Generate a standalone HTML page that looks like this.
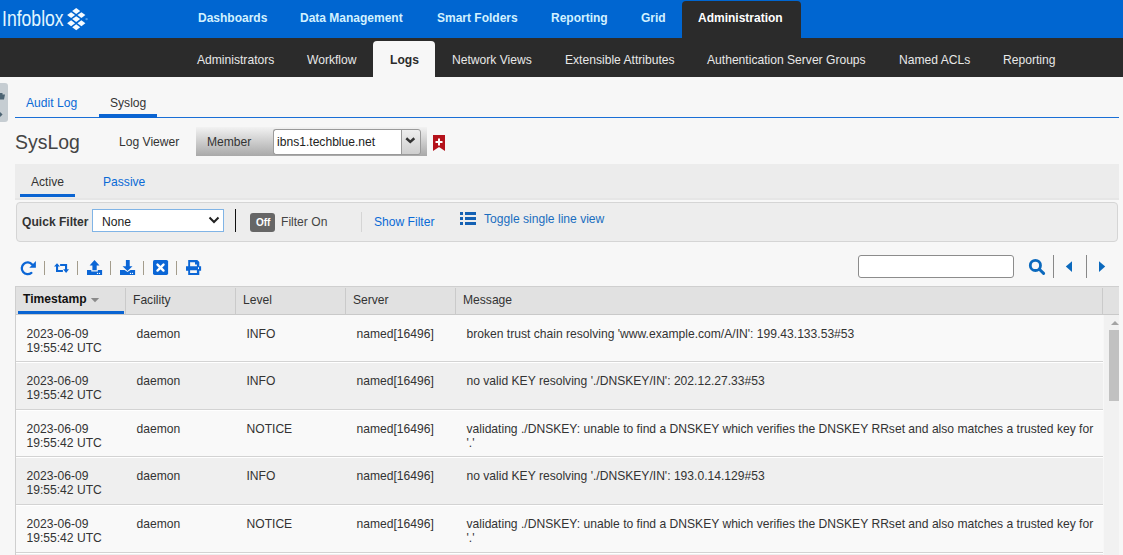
<!DOCTYPE html>
<html><head><meta charset="utf-8">
<style>
*{box-sizing:border-box;margin:0;padding:0}
html,body{width:1123px;height:555px;overflow:hidden;background:#f7f7f7;font-family:"Liberation Sans",sans-serif;font-size:12.1px;color:#333}
.abs{position:absolute;white-space:nowrap;line-height:14px}
#top{position:absolute;left:0;top:0;width:1123px;height:38px;background:#0066d1}
#top .n{position:absolute;top:11px;font-weight:bold;font-size:12px;color:#d2f1ff;line-height:14px;white-space:nowrap}
#adm{position:absolute;left:682px;top:1px;width:119px;height:37px;background:#2b2b2b;border-radius:4px 4px 0 0}
#sub{position:absolute;left:0;top:38px;width:1123px;height:39px;background:#2b2b2b}
#sub .n{position:absolute;top:15px;color:#e8e8e8;line-height:14px;white-space:nowrap}
#logs{position:absolute;left:373px;top:3px;width:62px;height:36px;background:#f7f7f7;border-radius:4px 4px 0 0}
.blue{color:#0a6ad6}
#tabline{position:absolute;left:15px;top:117px;width:1104px;height:1px;background:#1a6fd6}
#member{position:absolute;left:196px;top:127px;width:231px;height:29px;background:linear-gradient(#f2f2f2,#a9a9a9)}
#minput{position:absolute;left:273px;top:129px;width:130px;height:26px;background:#fff;border:1px solid #9a9a9a;border-radius:3px 0 0 3px;border-right:none}
#mbtn{position:absolute;left:401px;top:129px;width:20px;height:26px;background:linear-gradient(#eeeeee,#cfcfcf);border:1px solid #9a9a9a;border-radius:0 3px 3px 0}
#band{position:absolute;left:15px;top:164px;width:1104px;height:36px;background:#ececec;border-bottom:2px solid #e6e6e6}
#qf{position:absolute;left:16px;top:202px;width:1102px;height:40px;background:#ededed;border:1px solid #d5d5d5;border-radius:4px}
#sel{position:absolute;left:92px;top:209px;width:132px;height:23px;background:#fff;border:1px solid #80b4e6}
.sep{position:absolute;width:1px;background:#a39c8c}
#search{position:absolute;left:858px;top:255px;width:156px;height:23px;background:#fff;border:1px solid #8c8c8c;border-radius:3px}
#grid{position:absolute;left:15px;top:286px;width:1104px;height:280px;border:1px solid #cfcfcf;border-bottom:none;border-right:none;background:#f9f9f9}
#hdr{position:absolute;left:0;top:0;width:1103px;height:28px;background:#e1e1e1;border-bottom:1px solid #c9c9c9}
.hc{position:absolute;top:1px;height:27px;border-right:1px solid #cacaca}
.ht{position:absolute;top:6px;line-height:14px;color:#333;white-space:nowrap}
.row{position:absolute;left:0;width:1087px;border-bottom:1px solid #d3d3d3}
.row .c{position:absolute;top:12px;line-height:14px;color:#333;white-space:nowrap}
</style></head><body>
<div id="top">
  <div class="abs" style="left:2px;top:6px;color:#e2f6ff;font-size:22px;line-height:25px;transform:scaleX(0.80);transform-origin:0 0">Infoblox</div>
  <svg style="position:absolute;left:66px;top:7px" width="24" height="24" viewBox="66 7 24 24">
    <g fill="#f4fbff"><path d="M76.20 8.05 L80.20 11.00 L76.20 13.95 L72.20 11.00Z"/><path d="M71.10 12.15 L75.10 15.10 L71.10 18.05 L67.10 15.10Z"/><path d="M81.40 12.15 L85.40 15.10 L81.40 18.05 L77.40 15.10Z"/><path d="M76.20 16.15 L80.20 19.10 L76.20 22.05 L72.20 19.10Z"/><path d="M71.10 20.25 L75.10 23.20 L71.10 26.15 L67.10 23.20Z"/><path d="M81.40 20.25 L85.40 23.20 L81.40 26.15 L77.40 23.20Z"/><path d="M76.20 24.25 L80.20 27.20 L76.20 30.15 L72.20 27.20Z"/></g>
    <circle cx="86.6" cy="19.1" r="1.2" fill="#4f9be8"/>
  </svg>
  <div class="n" style="left:198px">Dashboards</div>
  <div class="n" style="left:300px">Data Management</div>
  <div class="n" style="left:437px">Smart Folders</div>
  <div class="n" style="left:551px">Reporting</div>
  <div class="n" style="left:641px">Grid</div>
  <div id="adm"></div>
  <div class="n" style="left:698px;color:#fff">Administration</div>
</div>
<div id="sub">
  <div id="logs"></div>
  <div class="n" style="left:197px">Administrators</div>
  <div class="n" style="left:307px">Workflow</div>
  <div class="n" style="left:390px;font-weight:bold;color:#2b2b2b">Logs</div>
  <div class="n" style="left:452px">Network Views</div>
  <div class="n" style="left:565px">Extensible Attributes</div>
  <div class="n" style="left:707px">Authentication Server Groups</div>
  <div class="n" style="left:899px">Named ACLs</div>
  <div class="n" style="left:1003px">Reporting</div>
</div>

<!-- left handle -->
<div style="position:absolute;left:0;top:83px;width:8px;height:39px;background:#c6cdd2;border-radius:0 3px 3px 0"></div>

<!-- tabs -->
<div class="abs blue" style="left:26px;top:96px">Audit Log</div>
<div class="abs" style="left:110px;top:96px;color:#333">Syslog</div>
<div id="tabline"></div>
<div style="position:absolute;left:99px;top:114px;width:58px;height:4px;background:#0a64d2"></div>

<!-- title row -->
<div class="abs" style="left:15px;top:131px;font-size:21px;line-height:22px;color:#444;transform:scaleX(0.925);transform-origin:0 0">SysLog</div>
<div class="abs" style="left:119px;top:135px;color:#333">Log Viewer</div>
<div id="member"></div>
<div class="abs" style="left:207px;top:135px;color:#333">Member</div>
<div id="minput"></div>
<div class="abs" style="left:277px;top:135px;color:#222">ibns1.techblue.net</div>
<div id="mbtn"></div>
<svg style="position:absolute;left:404px;top:135px" width="13" height="10" viewBox="0 0 13 10"><path d="M2.3 3.3 L6.3 6.9 L10.3 3.3" fill="none" stroke="#333" stroke-width="2.5"/></svg>
<svg style="position:absolute;left:433px;top:135px" width="12" height="16" viewBox="0 0 12 16"><path d="M0 0 H12 V16 L6 12 L0 16Z" fill="#b5121b"/><path d="M6 3.5 V10.5 M2.5 7 H9.5" stroke="#fff" stroke-width="2"/></svg>

<!-- active/passive -->
<div id="band"></div>
<div class="abs" style="left:31px;top:175px;color:#333">Active</div>
<div class="abs blue" style="left:103px;top:175px">Passive</div>
<div style="position:absolute;left:20px;top:194px;width:55px;height:3px;background:#0a64d2"></div>

<!-- quick filter -->
<div id="qf"></div>
<div class="abs" style="left:22px;top:215px;font-weight:bold;color:#333">Quick Filter</div>
<div id="sel"></div>
<div class="abs" style="left:102px;top:215px;color:#222">None</div>
<svg style="position:absolute;left:208px;top:216px" width="12" height="8" viewBox="0 0 12 8"><path d="M1.5 1.5 L6 6 L10.5 1.5" fill="none" stroke="#222" stroke-width="2"/></svg>
<div style="position:absolute;left:235px;top:209px;width:1px;height:23px;background:#111"></div>
<div style="position:absolute;left:250px;top:213px;width:25px;height:19px;background:#666;border-radius:3px"></div>
<div class="abs" style="left:256px;top:217px;font-size:10px;line-height:12px;font-weight:bold;color:#fff">Off</div>
<div class="abs" style="left:281px;top:215px;color:#444">Filter On</div>
<div style="position:absolute;left:361px;top:212px;width:1px;height:20px;background:#d5d5d5"></div>
<div class="abs blue" style="left:374px;top:215px">Show Filter</div>
<svg style="position:absolute;left:460px;top:211px" width="17" height="15" viewBox="0 0 17 15"><g fill="#1461b4"><rect x="0" y="1" width="3" height="3"/><rect x="0" y="6" width="3" height="3"/><rect x="0" y="11" width="3" height="3"/><rect x="5" y="1" width="11" height="3"/><rect x="5" y="6" width="11" height="3"/><rect x="5" y="11" width="11" height="3"/></g></svg>
<div class="abs" style="left:484px;top:212px;color:#1a6dc0">Toggle single line view</div>

<!-- toolbar -->
<div class="sep" style="left:44px;top:261px;height:14px"></div>
<div class="sep" style="left:77px;top:261px;height:14px"></div>
<div class="sep" style="left:110px;top:261px;height:14px"></div>
<div class="sep" style="left:143px;top:261px;height:14px"></div>
<div class="sep" style="left:176px;top:261px;height:14px"></div>

<div id="search"></div>
<!-- handle icons -->
<svg style="position:absolute;left:0;top:90px" width="8" height="28" viewBox="0 0 8 28"><path d="M0 3 H2.5 V4.5 H5 L4 9.5 H0Z" fill="#4d6473"/><path d="M0 22 L2.6 24.5 L0 27Z" fill="#4d6473"/></svg>
<!-- toolbar icons -->
<svg style="position:absolute;left:18px;top:257px" width="22" height="22" viewBox="0 0 22 22">
 <path d="M13.4 15.9 A5.9 5.9 0 1 1 14.1 7.4" fill="none" stroke="#0b66d6" stroke-width="2.3" stroke-linecap="round"/>
 <path d="M17.9 4 V10.7 H11.3Z" fill="#0b66d6"/>
</svg>
<svg style="position:absolute;left:51px;top:257px" width="22" height="22" viewBox="0 0 22 22" fill="#0b66d6">
 <path d="M6 6.2 L9 9.6 H7.1 V12.9 H11.9 V14.9 H5 V9.6 H3Z"/>
 <path d="M9.1 7 H16.1 V12.3 H18 L15.1 15.9 L12.1 12.3 H14 V9 H9.1Z"/>
</svg>
<svg style="position:absolute;left:84px;top:257px" width="22" height="22" viewBox="0 0 22 22" fill="#0b66d6">
 <path d="M10.5 3 L15.5 8.5 H12.7 V13.3 H8.4 V8.5 H5.6Z"/>
 <path d="M3 12.9 H7.3 V14.5 H13.8 V12.9 H18.1 V17.9 H3Z"/>
 <circle cx="13.5" cy="16.4" r="0.65" fill="#fff"/><circle cx="15.5" cy="16.4" r="0.65" fill="#fff"/>
</svg>
<svg style="position:absolute;left:117px;top:257px" width="22" height="22" viewBox="0 0 22 22" fill="#0b66d6">
 <path d="M8.9 3 H12.7 V9.3 H15.5 L10.5 14.1 L5.6 9.3 H8.9Z"/>
 <path d="M3 12.9 H7.6 L10.5 15 L13.5 12.9 H18.1 V17.9 H3Z"/>
 <circle cx="13.5" cy="16.4" r="0.65" fill="#fff"/><circle cx="15.5" cy="16.4" r="0.65" fill="#fff"/>
</svg>
<svg style="position:absolute;left:150px;top:257px" width="22" height="22" viewBox="0 0 22 22">
 <rect x="3" y="3" width="15.1" height="14.9" rx="1.6" fill="#0b66d6"/>
 <path d="M7.5 7.6 L13.5 13.6 M13.5 7.6 L7.5 13.6" stroke="#fff" stroke-width="2.4" stroke-linecap="round"/>
</svg>
<svg style="position:absolute;left:183px;top:257px" width="22" height="22" viewBox="0 0 22 22" fill="#0b66d6">
 <path fill-rule="evenodd" d="M5.2 3 H14.3 L16.3 5 V9.3 H18.1 V13.7 H16.3 V17.9 H5.2 V13.7 H3 V9.3 H5.2Z M7.1 5.2 V9.3 H13.9 V7.4 H12 V5.2Z M7.1 13.3 V15.9 H13.9 V13.3Z"/>
 <rect x="15" y="10.3" width="1" height="1.8" fill="#fff"/>
</svg>
<!-- search icons -->
<svg style="position:absolute;left:1025px;top:255px" width="24" height="24" viewBox="0 0 24 24">
 <circle cx="10.4" cy="10.4" r="5.1" fill="none" stroke="#0b69bd" stroke-width="2.8"/>
 <path d="M14.6 14.5 L18.6 18.4" stroke="#0b69bd" stroke-width="3" stroke-linecap="round"/>
</svg>
<svg style="position:absolute;left:1064px;top:260px" width="10" height="14" viewBox="0 0 10 14"><path d="M8 1.3 V12 L1.8 6.6Z" fill="#0b69bd"/></svg>
<svg style="position:absolute;left:1097px;top:260px" width="10" height="14" viewBox="0 0 10 14"><path d="M2 1.3 V12 L8.2 6.6Z" fill="#0b69bd"/></svg>

<div style="position:absolute;left:1053px;top:255px;width:1px;height:23px;background:#888"></div>
<div style="position:absolute;left:1086px;top:255px;width:1px;height:23px;background:#888"></div>

<!-- grid -->
<div id="grid">
  <div id="hdr">
    <div class="hc" style="left:0;width:110px"></div>
    <div class="hc" style="left:110px;width:110px"></div>
    <div class="hc" style="left:220px;width:110px"></div>
    <div class="hc" style="left:330px;width:110px"></div>
    <div class="hc" style="left:440px;width:647px"></div>
    <div class="ht" style="left:7px;top:5px;font-weight:bold;color:#111">Timestamp</div><svg style="position:absolute;left:74px;top:10px" width="10" height="6" viewBox="0 0 10 6"><path d="M0.8 1 H9.2 L5 5.2Z" fill="#8a8a8a"/></svg>
    <div style="position:absolute;left:2px;top:24px;width:106px;height:3px;background:#0a64d2"></div>
    <div class="ht" style="left:117px">Facility</div>
    <div class="ht" style="left:227px">Level</div>
    <div class="ht" style="left:337px">Server</div>
    <div class="ht" style="left:447px">Message</div>
    <div class="hc" style="left:1087px;width:16px;border-right:none"></div>
  </div>
<div class="row" style="top:28px;height:47px;background:#f9f9f9;"><div class="c" style="left:10.5px">2023-06-09<br>19:55:42 UTC</div><div class="c" style="left:120.5px">daemon</div><div class="c" style="left:230.5px">INFO</div><div class="c" style="left:340.5px">named[16496]</div><div class="c" style="left:450.5px">broken trust chain resolving 'www.example.com/A/IN': 199.43.133.53#53</div></div>
<div class="row" style="top:75px;height:48px;background:#efefef;border-top:1px solid #fff;"><div class="c" style="left:10.5px;top:11px">2023-06-09<br>19:55:42 UTC</div><div class="c" style="left:120.5px;top:11px">daemon</div><div class="c" style="left:230.5px;top:11px">INFO</div><div class="c" style="left:340.5px;top:11px">named[16496]</div><div class="c" style="left:450.5px;top:11px">no valid KEY resolving './DNSKEY/IN': 202.12.27.33#53</div></div>
<div class="row" style="top:123px;height:47px;background:#f9f9f9;border-top:1px solid #fff;"><div class="c" style="left:10.5px;top:11px">2023-06-09<br>19:55:42 UTC</div><div class="c" style="left:120.5px;top:11px">daemon</div><div class="c" style="left:230.5px;top:11px">NOTICE</div><div class="c" style="left:340.5px;top:11px">named[16496]</div><div class="c" style="left:450.5px;top:11px">validating ./DNSKEY: unable to find a DNSKEY which verifies the DNSKEY RRset and also matches a trusted key for<br>'.'</div></div>
<div class="row" style="top:170px;height:48px;background:#efefef;border-top:1px solid #fff;"><div class="c" style="left:10.5px;top:11px">2023-06-09<br>19:55:42 UTC</div><div class="c" style="left:120.5px;top:11px">daemon</div><div class="c" style="left:230.5px;top:11px">INFO</div><div class="c" style="left:340.5px;top:11px">named[16496]</div><div class="c" style="left:450.5px;top:11px">no valid KEY resolving './DNSKEY/IN': 193.0.14.129#53</div></div>
<div class="row" style="top:218px;height:48px;background:#f9f9f9;border-top:1px solid #fff;"><div class="c" style="left:10.5px;top:11px">2023-06-09<br>19:55:42 UTC</div><div class="c" style="left:120.5px;top:11px">daemon</div><div class="c" style="left:230.5px;top:11px">NOTICE</div><div class="c" style="left:340.5px;top:11px">named[16496]</div><div class="c" style="left:450.5px;top:11px">validating ./DNSKEY: unable to find a DNSKEY which verifies the DNSKEY RRset and also matches a trusted key for<br>'.'</div></div>
<div class="row" style="top:266px;height:48px;background:#efefef;border-top:1px solid #fff;"><div class="c" style="left:10.5px;top:11px">2023-06-09<br>19:55:42 UTC</div><div class="c" style="left:120.5px;top:11px">daemon</div><div class="c" style="left:230.5px;top:11px">INFO</div><div class="c" style="left:340.5px;top:11px">named[16496]</div><div class="c" style="left:450.5px;top:11px"></div></div>
<div style="position:absolute;left:1087px;top:28px;width:16px;height:300px;background:#f1f1f1;border-left:1px solid #f7f7f7"></div>
<svg style="position:absolute;left:1094px;top:33px" width="10" height="6" viewBox="0 0 10 6"><path d="M1 5 L5 1 L9 5Z" fill="#a3a3a3"/></svg>
<div style="position:absolute;left:1093px;top:43px;width:10px;height:71px;background:#c1c1c1"></div>

</div>
</body></html>
